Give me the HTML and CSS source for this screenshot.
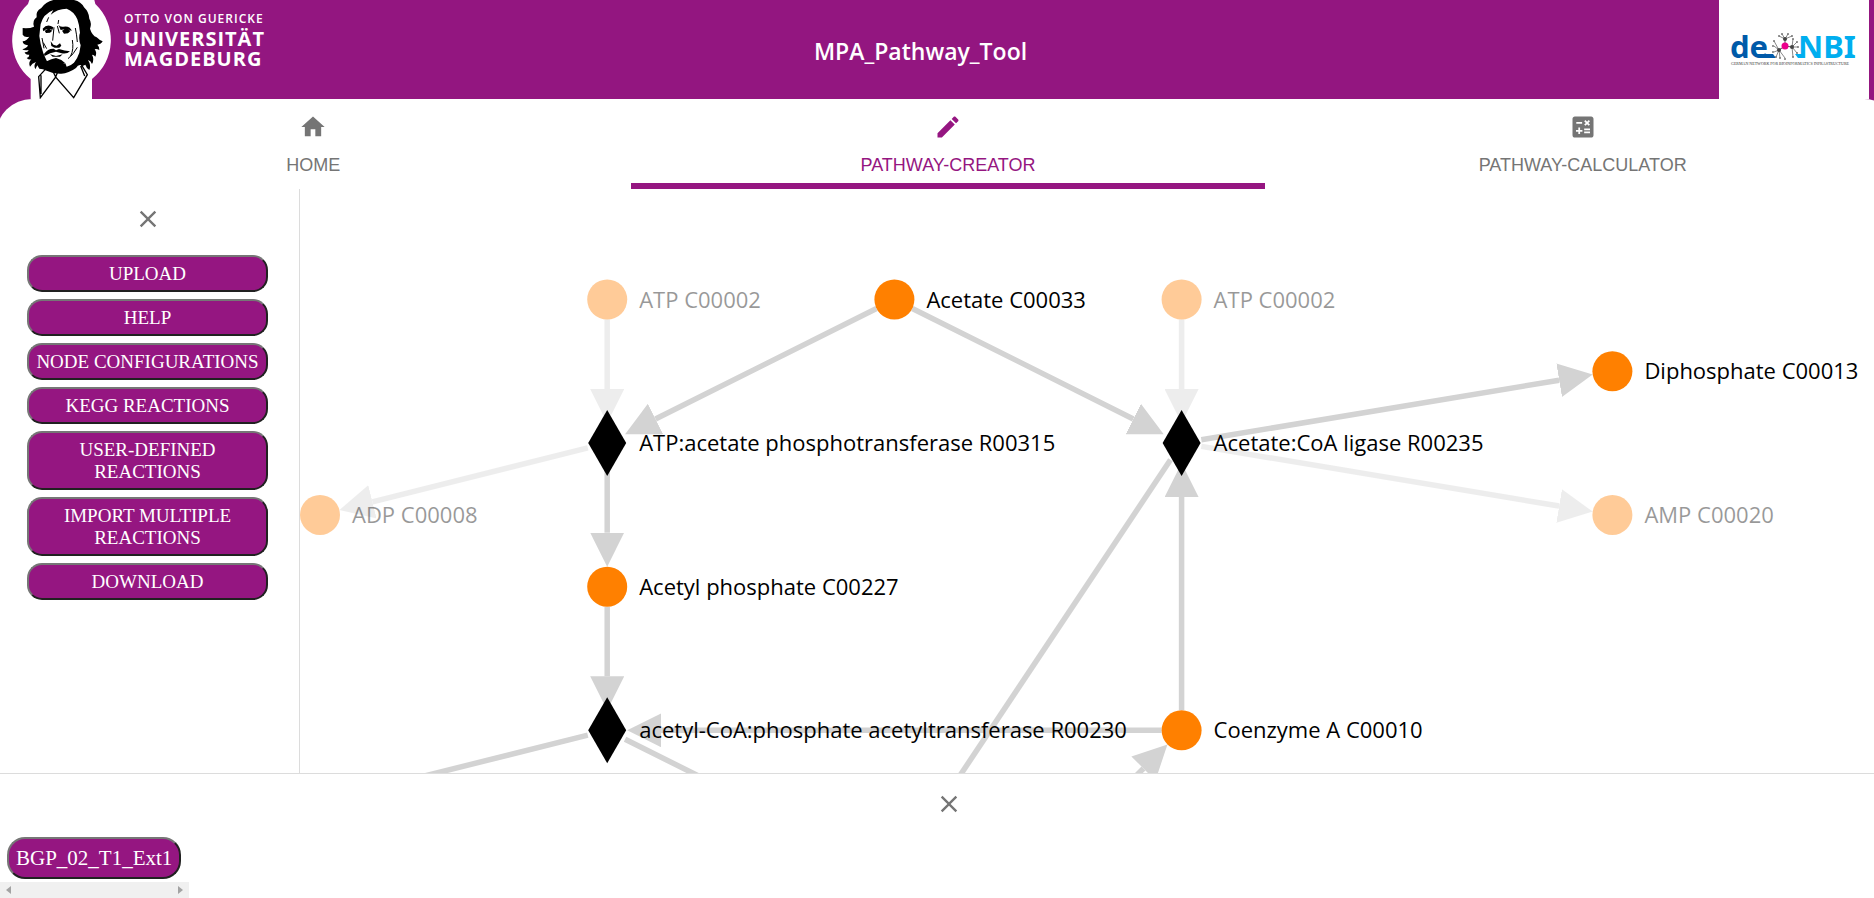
FILE: index.html
```
<!DOCTYPE html>
<html lang="en">
<head>
<meta charset="utf-8">
<title>MPA_Pathway_Tool</title>
<link rel="stylesheet" href="styles.css">
</head>
<body>
<div class="top">
  <header class="header">
    <div class="ovgu">
      <svg class="portrait" viewBox="0 0 360 297" aria-hidden="true">
        <path fill="#fff" d="M88 0H283L286 12A149 149 0 0 1 276 237V297H92V237A149 149 0 0 1 84 12Z"/>
        <path d="M160 0H222Q244 5 252 22Q267 36 268 56Q276 70 270 86Q276 106 290 112Q300 122 308 124Q302 134 292 134Q300 142 298 150Q290 146 284 148Q292 158 286 170Q282 164 276 164Q284 178 276 192Q272 182 264 180Q274 196 268 210Q260 206 256 194L248 198Q236 190 228 204Q206 220 184 221Q160 222 140 212Q128 206 118 206L112 196L106 208Q100 196 108 186Q96 190 90 200Q84 188 94 178Q86 180 80 174Q88 172 88 164Q76 166 74 156Q84 158 86 150Q72 152 67 148Q82 144 84 136Q68 134 68 124Q80 122 88 110Q74 114 68 104V84Q88 86 102 80Q96 62 110 52Q106 34 124 24Q136 6 160 0Z"/>
        <path fill="#fff" d="M122 72Q130 42 160 30L152 44Q172 26 200 26Q222 34 232 58Q238 74 240 98Q234 112 242 136L238 158Q232 176 222 188Q214 196 200 200L196 190Q190 194 182 188L170 194L160 188L150 194Q142 190 138 178L130 160L122 132L118 108Q120 88 122 72Z"/>
        <path d="M128 86Q142 70 160 82L157 90Q142 82 130 94ZM134 92L146 86L157 92L150 98L138 99ZM175 74Q180 82 190 80Q208 76 216 92Q200 84 182 90ZM186 92L198 86L212 92L204 100L192 101ZM152 124L160 134L170 137L180 130L184 137L178 143L164 143L154 138ZM132 162Q144 145 161 146L168 151L177 147Q194 153 210 154Q200 164 182 159L168 155Q150 158 134 168ZM150 163L168 168L188 163L180 170L158 170ZM154 178L168 174L184 180L196 190L176 196L158 194L144 200L140 184Z"/>
        <path fill="none" stroke="#000" stroke-width="3" d="M226 84Q230 104 232 126M217 120Q222 148 212 168M204 176Q220 164 232 142M200 206Q228 194 240 166M172 78L178 100M126 114L132 145M162 82L158 122M130 128L140 146M176 60L174 72M146 52L140 66"/>
        <path fill="none" stroke="#000" stroke-width="4" d="M136 208L116 230L121 293L167 231L221 293L262 224L244 194M167 231L172 218M167 231L161 218M123 226V282M242 198L254 228"/>
      </svg>
      <div class="wordmark">
        <span class="wordmark-small">OTTO VON GUERICKE</span>
        <span class="wordmark-big">UNIVERSITÄT</span>
        <span class="wordmark-big">MAGDEBURG</span>
      </div>
    </div>
    <h1 class="title">MPA_Pathway_Tool</h1>
    <a class="denbi" href="#denbi" aria-label="de.NBI">
      <svg viewBox="0 0 150 99" width="150" height="99">
        <text class="denbi-de" x="11" y="58">de</text>
        <text class="denbi-nbi" x="79" y="58">NBI</text>
        <path fill="#005aa9" d="M37 54H54L57 58H40Z"/>
        <path fill="#00aeef" d="M76 54H84V58H79Z"/>
        <g stroke="#888" stroke-width="1" fill="none">
          <path stroke="#555" d="M66 46L66 39M66 46L60 50M66 46L73 47"/>
          <path d="M66 39L60 36M66 39L63 34M66 39L69 34M66 39L73 36M60 50L55 41M60 50L55 46M60 50L55 52M60 50L57 57M60 50L61 58M60 50L66 58M73 47L74 39M73 47L78 42M73 47L79 47M73 47L78 53M73 47L74 57"/>
        </g>
        <g fill="#777"><circle cx="60" cy="36" r="1"/><circle cx="63" cy="34" r="1"/><circle cx="69" cy="34" r="1"/><circle cx="73" cy="36" r="1"/><circle cx="55" cy="41" r="1"/><circle cx="54" cy="46" r="1"/><circle cx="54" cy="52" r="1"/><circle cx="57" cy="57" r="1"/><circle cx="61" cy="58" r="1"/><circle cx="66" cy="59" r="1"/><circle cx="74" cy="39" r="1"/><circle cx="78" cy="42" r="1"/><circle cx="79" cy="47" r="1"/><circle cx="78" cy="53" r="1"/><circle cx="74" cy="57" r="1"/></g>
        <g fill="#444"><circle cx="66" cy="39" r="2"/><circle cx="60" cy="50" r="2"/><circle cx="73" cy="47" r="2"/></g>
        <circle cx="66" cy="46" r="3.5" fill="#ec008c"/>
        <text class="denbi-sub" x="12" y="65">GERMAN NETWORK FOR BIOINFORMATICS INFRASTRUCTURE</text>
      </svg>
    </a>
  </header>
  <nav class="tabs" role="tablist">
    <button class="tab" role="tab">
      <svg class="tab-icon" viewBox="0 0 24 24"><path d="M10 20v-6h4v6h5v-8h3L12 3 2 12h3v8z"/></svg>
      HOME
    </button>
    <button class="tab tab-active" role="tab" aria-selected="true">
      <svg class="tab-icon" viewBox="0 0 24 24"><path d="M3 17.25V21h3.75L17.81 9.94l-3.75-3.75L3 17.25zM20.71 7.04c.39-.39.39-1.02 0-1.41l-2.34-2.34c-.39-.39-1.02-.39-1.41 0l-1.83 1.83 3.75 3.75 1.83-1.83z"/></svg>
      PATHWAY-CREATOR
    </button>
    <button class="tab" role="tab">
      <svg class="tab-icon" viewBox="0 0 24 24"><path d="M19 3H5c-1.1 0-2 .9-2 2v14c0 1.1.9 2 2 2h14c1.1 0 2-.9 2-2V5c0-1.1-.9-2-2-2zm-5.97 4.06L14.09 6l1.41 1.41L16.91 6l1.06 1.06-1.41 1.41 1.41 1.41-1.06 1.06-1.41-1.4-1.41 1.41-1.06-1.06 1.41-1.41-1.41-1.42zm-6.78.66h5v1.5h-5v-1.5zM11.500 16h-2v2H8v-2H6v-1.500h2v-2h1.500v2h2V16zm6.500 1.250h-5v-1.500h5v1.500zm0-2.500h-5v-1.500h5v1.500z"/></svg>
      PATHWAY-CALCULATOR
    </button>
  </nav>
</div>

<div class="workspace">
  <aside class="sidebar">
    <button class="close" aria-label="Close menu"><svg viewBox="0 0 24 24"><path d="M19 6.410L17.590 5 12 10.590 6.410 5 5 6.410 10.590 12 5 17.590 6.410 19 12 13.410 17.590 19 19 17.590 13.410 12z"/></svg></button>
    <div class="menu">
      <button class="pill">UPLOAD</button>
      <button class="pill">HELP</button>
      <button class="pill">NODE CONFIGURATIONS</button>
      <button class="pill">KEGG REACTIONS</button>
      <button class="pill">USER-DEFINED REACTIONS</button>
      <button class="pill">IMPORT MULTIPLE REACTIONS</button>
      <button class="pill">DOWNLOAD</button>
    </div>
  </aside>
  <main class="canvas">
    <svg class="graph" role="img" aria-label="Pathway graph">
      <defs>
        <marker id="arrow" viewBox="0 0 34 34" markerWidth="34" markerHeight="34" refX="0" refY="17" orient="auto" markerUnits="userSpaceOnUse"><path d="M0 0L34 17L0 34Z" fill="#d3d3d3"/></marker>
      </defs>
      <g id="links" class="links"></g>
      <g id="nodes"></g>
    </svg>
  </main>
</div>

<footer class="drawer">
  <button class="close drawer-close" aria-label="Close drawer"><svg viewBox="0 0 24 24"><path d="M19 6.410L17.590 5 12 10.590 6.410 5 5 6.410 10.590 12 5 17.590 6.410 19 12 13.410 17.590 19 19 17.590 13.410 12z"/></svg></button>
  <div class="samples">
    <button class="pill pill-sample">BGP_02_T1_Ext1</button>
    <div class="scrollbar" aria-hidden="true">
      <svg viewBox="0 0 5 8" width="5" height="8"><path d="M5 0V8L0 4Z"/></svg>
      <svg viewBox="0 0 5 8" width="5" height="8"><path d="M0 0V8L5 4Z"/></svg>
    </div>
  </div>
</footer>
<script src="graph.js"></script>
</body>
</html>
```

FILE: styles.css
```
* { box-sizing: border-box; }

body {
  margin: 0;
  height: 100vh;
  display: flex;
  flex-direction: column;
  overflow: hidden;
  background: #fff;
  font-family: "Open Sans", "Noto Sans", sans-serif;
}

button { cursor: pointer; }

.top { background: #931680; overflow: hidden; }

.header {
  display: flex;
  align-items: stretch;
  padding-right: 5px;
}

.ovgu { display: flex; width: 270px; }
.portrait { width: 120px; height: 99px; }

.wordmark {
  display: flex;
  flex-direction: column;
  padding: 9px 0 0 4px;
  color: #fff;
  white-space: nowrap;
}
.wordmark-small { font: 600 12px/20px "Open Sans", sans-serif; letter-spacing: 1px; }
.wordmark-big { font: 700 20px/20px "Open Sans", sans-serif; letter-spacing: 1px; }

.title {
  flex: 1;
  align-self: center;
  margin: 0;
  padding: 2px 148px 0 0;
  color: #fff;
  font-size: 23px;
  font-weight: 600;
  line-height: 32px;
  text-align: center;
}

.denbi { display: block; background: #fff; }
.denbi svg { display: block; }
.denbi-de, .denbi-nbi { font: 700 31px "Noto Sans", sans-serif; }
.denbi-de { fill: #005aa9; }
.denbi-nbi { fill: #00aeef; }
.denbi-sub { font: 4px "Liberation Serif", serif; fill: #333; }

.tabs {
  display: flex;
  margin: 0 -26px 0 -4px;
  background: #fff;
  border-radius: 36px 36px 0 0;
}
.tab {
  flex: 1;
  display: flex;
  flex-direction: column;
  align-items: center;
  gap: 12px;
  height: 90px;
  padding: 14px 0 0;
  border: 0;
  border-bottom: 6px solid transparent;
  background: none;
  color: #757575;
  font: 18px/24px "Liberation Sans", Arial, sans-serif;
}
.tab-active { color: #951681; border-bottom-color: #951681; }
.tab-icon { width: 28px; height: 28px; fill: currentColor; }

.workspace { flex: 1; display: flex; min-height: 0; }

.sidebar {
  width: 300px;
  padding: 16px 31px 0 27px;
  border-right: 1px solid #dcdcdc;
}
.close {
  display: block;
  margin: 0 auto;
  padding: 0;
  border: 0;
  background: none;
}
.close svg { display: block; width: 28px; height: 28px; fill: #757575; }

.menu {
  display: flex;
  flex-direction: column;
  gap: 7px;
  padding-top: 22px;
}
.pill {
  padding: 6px 4px 5px;
  border: 2px solid;
  border-color: #767676 #212121 #212121 #767676;
  border-radius: 15px;
  background: #951681;
  color: #fff;
  font: 19px/22px "Liberation Serif", "Times New Roman", serif;
}

.canvas { flex: 1; min-width: 0; overflow: hidden; }
.graph { display: block; width: 100%; height: 100%; }
.links line { stroke: #d3d3d3; stroke-width: 5.5; }
.faded { opacity: 0.4; }
.compound { fill: #ff8000; }
.label { font: 22px "Open Sans", "Noto Sans", sans-serif; fill: #000; }

.drawer {
  height: 125px;
  display: flex;
  flex-direction: column;
  justify-content: space-between;
  border-top: 1px solid #dcdcdc;
}
.drawer-close { align-self: center; margin: 16px 0 0 24px; }
.samples { width: 189px; }
.pill-sample {
  display: block;
  margin: 0 0 3px 7px;
  padding: 8px 7px;
  border-radius: 18px;
  font-size: 21px;
}
.scrollbar {
  display: flex;
  justify-content: space-between;
  align-items: center;
  height: 16px;
  padding: 0 6px;
  background: #f0f0f0;
}
.scrollbar svg { fill: #a3a3a3; }
```

FILE: graph.js
```
const GRID = 143.6;
const ORIGIN = { x: 20, y: 110.5 };
const RADIUS = 20;
const ARROW = 34;

// Grid positions: x and y in multiples of GRID.
const nodes = {
  atp1: { x: 2, y: 0, label: "ATP C00002", faded: true },
  acetate: { x: 4, y: 0, label: "Acetate C00033" },
  atp2: { x: 6, y: 0, label: "ATP C00002", faded: true },
  diphosphate: { x: 9, y: 0.5, label: "Diphosphate C00013" },
  r315: { x: 2, y: 1, label: "ATP:acetate phosphotransferase R00315", reaction: true },
  r235: { x: 6, y: 1, label: "Acetate:CoA ligase R00235", reaction: true },
  adp: { x: 0, y: 1.5, label: "ADP C00008", faded: true },
  amp: { x: 9, y: 1.5, label: "AMP C00020", faded: true },
  acetylP: { x: 2, y: 2, label: "Acetyl phosphate C00227" },
  r230: { x: 2, y: 3, label: "acetyl-CoA:phosphate acetyltransferase R00230", reaction: true },
  coa: { x: 6, y: 3, label: "Coenzyme A C00010" },
  phosphate: { x: 0, y: 3.5 },
  acetylCoA: { x: 4, y: 4 },
  r: { x: 4, y: 5 }
};

const links = [
  ["atp1", "r315"], ["acetate", "r315"], ["acetate", "r235"], ["atp2", "r235"],
  ["r235", "diphosphate"], ["r235", "amp"], ["r315", "adp"], ["r315", "acetylP"],
  ["acetylP", "r230"], ["coa", "r230"], ["coa", "r235"], ["r235", "acetylCoA"],
  ["r230", "phosphate"], ["r230", "acetylCoA"], ["r", "coa"]
];

function add(parent, name, attrs, text) {
  const el = document.createElementNS("http://www.w3.org/2000/svg", name);
  for (const key in attrs) el.setAttribute(key, attrs[key]);
  if (text) el.textContent = text;
  parent.appendChild(el);
  return el;
}

const px = n => ORIGIN.x + n.x * GRID;
const py = n => ORIGIN.y + n.y * GRID;

const linkLayer = document.getElementById("links");
for (const [from, to] of links) {
  const a = nodes[from], b = nodes[to];
  const dx = px(b) - px(a), dy = py(b) - py(a);
  const length = Math.hypot(dx, dy);
  const ux = dx / length, uy = dy / length;
  const end = RADIUS + ARROW;
  add(linkLayer, "line", {
    x1: px(a) + ux * RADIUS, y1: py(a) + uy * RADIUS,
    x2: px(b) - ux * end, y2: py(b) - uy * end,
    "marker-end": "url(#arrow)",
    class: a.faded || b.faded ? "faded" : ""
  });
}

const nodeLayer = document.getElementById("nodes");
for (const n of Object.values(nodes)) {
  if (!n.label) continue;
  const g = add(nodeLayer, "g", { transform: `translate(${px(n)} ${py(n)})`, class: n.faded ? "faded" : "" });
  if (n.reaction) add(g, "path", { d: "M0 -33L19 0L0 33L-19 0Z" });
  else add(g, "circle", { r: RADIUS, class: "compound" });
  add(g, "text", { x: 32, y: 8, class: "label" }, n.label);
}
```
